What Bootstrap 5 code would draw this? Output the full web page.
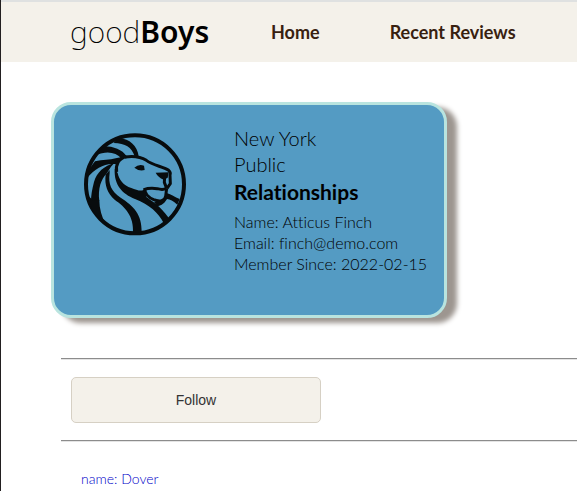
<!DOCTYPE html>
<html lang="en">
<head>
<meta charset="utf-8">
<meta name="viewport" content="width=device-width, initial-scale=1">
<title>goodBoys</title>
<link href="https://cdn.jsdelivr.net/npm/bootstrap@5.3.0/dist/css/bootstrap.min.css" rel="stylesheet">
<style>
body { font-family: Lato, "Liberation Sans", sans-serif; font-weight: 300; font-variant-ligatures: none; color: #000; border-left: 1px solid #221f20; min-height: 100vh; overflow-x: hidden; }
.site-bar { background: #f4f1ea; border-top: 2px solid #dfe1e1; height: 62px; padding: 0 0 0 69px; gap: 62px; }
.brand { font-family: "Noto Sans", "Open Sans", sans-serif; font-size: 30px; line-height: 40px; font-weight: 200; width: 139px; color: #000; }
.brand strong { font-weight: 600; }
.site-links { gap: 70px; }
.site-links a { font-size: 18px; line-height: 24px; font-weight: 700; color: #382110; }
.page { padding: 40px 0 0 50px; }
.library-card { width: 396px; min-height: 216px; background: #549bc3; border: 3px solid #b9e4df; border-radius: 20px; box-shadow: 10px 5px 5px #9d9690; padding: 20px 17px 0 21px; gap: 39px; }
.lion { width: 120px; height: 120px; }
.org { font-size: 20px; line-height: 26px; }
.org strong { font-size: 21px; font-weight: 700; line-height: 30px; }
.facts { font-size: 16px; line-height: 21px; margin-top: 4px; }
.rule { margin: 0 0 0 10px; border: 0; border-top: 1px solid #8c8c8c; border-bottom: 1px solid #e4e4e4; opacity: 1; }
.library-card + .rule { margin-top: 40px; }
.follow { width: 250px; height: 46px; margin: 17px 20px; background: #f4f1ea; border: 1px solid #d6d0c4; border-radius: 5px; font: 400 14px/20px "Liberation Sans", sans-serif; color: #333; }
.pet { font-size: 14px; line-height: 20px; margin: 27px 0 0 30px; }
.pet a { color: #0000c8; }
</style>
<script src="https://cdn.jsdelivr.net/npm/bootstrap@5.3.0/dist/js/bootstrap.bundle.min.js"></script>
</head>
<body>
<header class="site-bar d-flex align-items-center">
  <a class="brand text-decoration-none text-nowrap" href="#">good<strong>Boys</strong></a>
  <nav class="site-links d-flex" aria-label="Main">
    <a class="text-decoration-none text-nowrap" href="#">Home</a>
    <a class="text-decoration-none text-nowrap" href="#">Recent Reviews</a>
  </nav>
</header>
<main class="page">
  <section class="library-card d-flex align-items-start">
    <svg class="lion flex-shrink-0" viewBox="0 0 360 360" role="img" aria-label="Lion emblem">
      <circle cx="180" cy="178" r="147" fill="none" stroke="#080c0e" stroke-width="12"/>
      <g fill="none" stroke="#080c0e" stroke-width="9" stroke-linejoin="round">
        <path d="M150 96 C177 92 195 94 214 106 C235 122 263 124 281 136 Q288 142 285 150 L286 176 L276 190"/>
        <path d="M154 95 C131 99 121 120 125 141"/>
        <path d="M210 190 C206 205 222 218 236 224 C254 231 270 228 272 214 L275 190"/>
        <path d="M207 194 C219 189 232 189 247 191 Q264 196 274 190"/>
        <path d="M269 156 L268 172 L275 190"/>
      </g>
      <g fill="#080c0e">
        <path d="M127 41 C158 37 187 60 191 94 L179 94 C169 66 152 55 116 54Z"/>
        <path d="M88 64 C115 64 142 74 155 94 L140 101 C122 80 95 77 62 90Z"/>
        <path d="M60 109 C84 103 104 106 122 100 L145 95 L125 118 C91 112 62 129 37 158 L40 139 C45 129 52 119 60 109Z"/>
        <path d="M118 114 C88 122 65 142 57 171 C51 194 48 211 48 228 L73 228 C68 190 79 162 94 147 L108 125Z"/>
        <path d="M37 210 L54 226 L73 226 C73 251 80 277 94 301 C62 279 44 246 37 210Z"/>
        <path d="M104 135 L92 149 C88 181 97 204 119 224 C150 246 177 272 174 324 L200 322 C201 266 175 243 137 218 C109 200 99 177 104 145Z"/>
        <path d="M119 132 C117 181 141 206 180 222 C224 239 250 264 266 294 L282 280 C254 240 230 228 214 216 L211 190 C203 202 187 196 169 189 C145 182 132 164 128 144Z"/>
        <path d="M178 128 Q191 116 207 122 L209 135 Q193 140 178 128Z"/>
        <path d="M242 143 L281 142 L278 158 L266 164 Q249 157 242 143Z"/>
        <path d="M275 204 C289 208 299 217 314 222 L307 239 C295 229 285 222 276 222 C265 240 255 243 246 243 L237 231 L268 222Z"/>
      </g>
    </svg>
    <div>
      <div class="org">New York<br>Public<br><strong class="d-block">Relationships</strong></div>
      <div class="facts text-nowrap">Name: Atticus Finch<br>Email: finch@demo.com<br>Member Since: 2022-02-15</div>
    </div>
  </section>
  <hr class="rule">
  <button class="follow d-block" type="button">Follow</button>
  <hr class="rule">
  <p class="pet"><a class="text-decoration-none" href="#">name: Dover</a></p>
</main>
</body>
</html>
